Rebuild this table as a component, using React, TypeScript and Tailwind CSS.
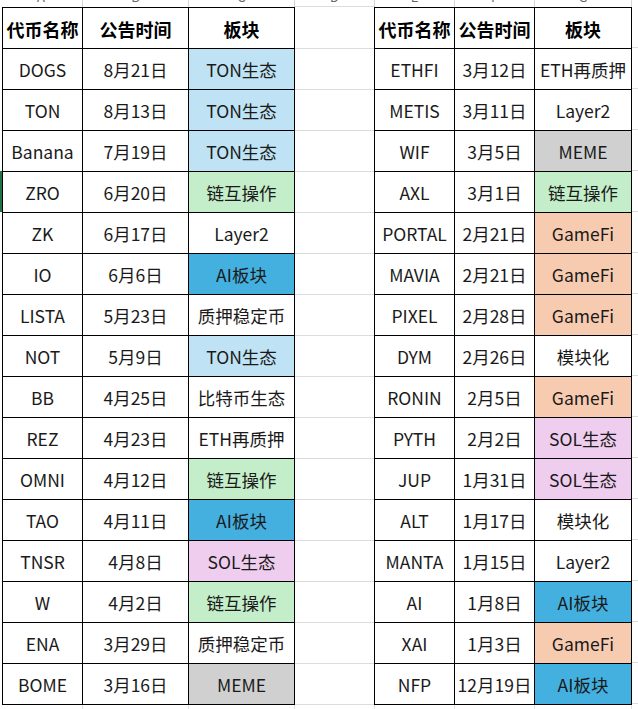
import React from "react";

type Row = [string, string, string, string];

const C = {
  w: "bg-white",
  lb: "bg-[#bfe3f4]",
  g: "bg-[#c4eec9]",
  b: "bg-[#43b0e0]",
  gr: "bg-[#d0d0d0]",
  p: "bg-[#f7cbb0]",
  pk: "bg-[#efcdee]",
};

const left: Row[] = [
  ["DOGS", "8月21日", "TON生态", C.lb],
  ["TON", "8月13日", "TON生态", C.lb],
  ["Banana", "7月19日", "TON生态", C.lb],
  ["ZRO", "6月20日", "链互操作", C.g],
  ["ZK", "6月17日", "Layer2", C.w],
  ["IO", "6月6日", "AI板块", C.b],
  ["LISTA", "5月23日", "质押稳定币", C.w],
  ["NOT", "5月9日", "TON生态", C.lb],
  ["BB", "4月25日", "比特币生态", C.w],
  ["REZ", "4月23日", "ETH再质押", C.w],
  ["OMNI", "4月12日", "链互操作", C.g],
  ["TAO", "4月11日", "AI板块", C.b],
  ["TNSR", "4月8日", "SOL生态", C.pk],
  ["W", "4月2日", "链互操作", C.g],
  ["ENA", "3月29日", "质押稳定币", C.w],
  ["BOME", "3月16日", "MEME", C.gr],
];

const right: Row[] = [
  ["ETHFI", "3月12日", "ETH再质押", C.w],
  ["METIS", "3月11日", "Layer2", C.w],
  ["WIF", "3月5日", "MEME", C.gr],
  ["AXL", "3月1日", "链互操作", C.g],
  ["PORTAL", "2月21日", "GameFi", C.p],
  ["MAVIA", "2月21日", "GameFi", C.p],
  ["PIXEL", "2月28日", "GameFi", C.p],
  ["DYM", "2月26日", "模块化", C.w],
  ["RONIN", "2月5日", "GameFi", C.p],
  ["PYTH", "2月2日", "SOL生态", C.pk],
  ["JUP", "1月31日", "SOL生态", C.pk],
  ["ALT", "1月17日", "模块化", C.w],
  ["MANTA", "1月15日", "Layer2", C.w],
  ["AI", "1月8日", "AI板块", C.b],
  ["XAI", "1月3日", "GameFi", C.p],
  ["NFP", "12月19日", "AI板块", C.b],
];

function Cell({ children, bg = "bg-white", bold = false }: { children: React.ReactNode; bg?: string; bold?: boolean }) {
  return (
    <div
      className={`${bg} flex items-center justify-center whitespace-nowrap pt-[2px] ${
        bold ? "font-bold text-[18px] text-black" : "text-[17.5px] text-[#1a1a1a]"
      }`}
    >
      {children}
    </div>
  );
}

function Table({ rows, cols }: { rows: Row[]; cols: string }) {
  return (
    <div className={`grid ${cols} auto-rows-[40px] gap-px bg-black p-px`}>
      <Cell bold>代币名称</Cell>
      <Cell bold>公告时间</Cell>
      <Cell bold>板块</Cell>
      {rows.map((r) => (
        <React.Fragment key={r[0] + r[1]}>
          <Cell>{r[0]}</Cell>
          <Cell>{r[1]}</Cell>
          <Cell bg={r[3]}>{r[2]}</Cell>
        </React.Fragment>
      ))}
    </div>
  );
}

function GrayCol({ className }: { className: string }) {
  return (
    <div className={`${className} flex flex-col`}>
      {Array.from({ length: 17 }).map((_, i) => (
        <div key={i} className="h-[41px] shrink-0 border-b border-[#dcdcdc]" />
      ))}
    </div>
  );
}

const stripCols: [string, string][] = [
  ["A", "w-[83px]"],
  ["B", "w-[106px]"],
  ["C", "w-[106px]"],
  ["D", "w-[80px]"],
  ["E", "w-[80px]"],
  ["F", "w-[80px]"],
  ["G", "w-[97px]"],
  ["H", "w-[80px]"],
];

export default function App() {
  return (
    <div className="w-[638px] h-[709px] overflow-hidden bg-white font-['Noto_Sans_CJK_SC','Microsoft_YaHei',sans-serif]">
      <div className="flex h-[7px] overflow-hidden">
        {stripCols.map(([l, w]) => (
          <div key={l} className={`${w} shrink-0 border-r border-[#d4d4d4] flex justify-center overflow-hidden`}>
            <span className="text-[13px] leading-[14px] mt-[-10px] text-[#666]">{l}</span>
          </div>
        ))}
      </div>
      <div className="flex">
        <div className="w-[2px] shrink-0 flex flex-col">
          <div className="h-[164px]" />
          <div className="h-[41px] bg-[#217346]" />
        </div>
        <div className="w-[293px] shrink-0">
          <Table rows={left} cols="grid-cols-[79px_105px_105px]" />
        </div>
        <GrayCol className="w-[79px] shrink-0 border-t border-[#dcdcdc] -mt-px pt-px" />
        <div className="w-[258px] shrink-0">
          <Table rows={right} cols="grid-cols-[79px_79px_96px]" />
        </div>
        <GrayCol className="flex-1" />
      </div>
      <div className="flex h-[4px]">
        {stripCols.map(([l, w]) => (
          <div key={l} className={`${w} shrink-0 border-r border-[#e0e0e0]`} />
        ))}
      </div>
    </div>
  );
}
